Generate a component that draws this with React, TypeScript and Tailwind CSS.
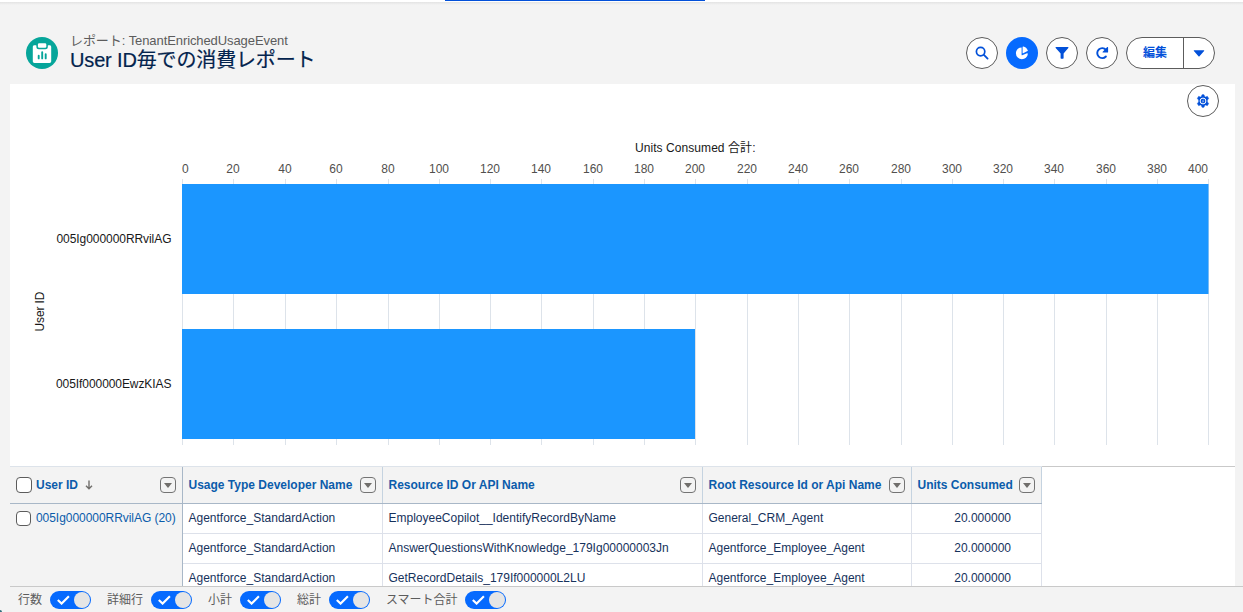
import React from "react";

const ticks = [182, 233, 285, 336, 388, 439, 490, 541, 593, 644, 695, 747, 798, 849, 901, 952, 1003, 1054, 1106, 1157, 1208];

const columns = [
  { label: "Usage Type Developer Name", width: "w-[200px]" },
  { label: "Resource ID Or API Name", width: "w-[320px]" },
  { label: "Root Resource Id or Api Name", width: "w-[209px]" },
  { label: "Units Consumed", width: "w-[130px]" },
];

const rows = [
  ["Agentforce_StandardAction", "EmployeeCopilot__IdentifyRecordByName", "General_CRM_Agent", "20.000000"],
  ["Agentforce_StandardAction", "AnswerQuestionsWithKnowledge_179Ig00000003Jn", "Agentforce_Employee_Agent", "20.000000"],
  ["Agentforce_StandardAction", "GetRecordDetails_179If000000L2LU", "Agentforce_Employee_Agent", "20.000000"],
];

const toggles = [
  { label: "行数", width: "w-[89px]" },
  { label: "詳細行", width: "w-[101px]" },
  { label: "小計", width: "w-[89px]" },
  { label: "総計", width: "w-[90px]" },
  { label: "スマート合計", width: "w-[121px] -ml-px tracking-[-0.05px]" },
];

function ReportIcon() {
  return (
    <svg width="32" height="32" viewBox="0 0 32 32" className="shrink-0" aria-hidden="true">
      <circle cx="16" cy="16" r="16" fill="#06a59a" />
      <rect x="11.9" y="6.2" width="8.4" height="4.6" rx="1.3" fill="#fff" />
      <path
        d="M8.500 8.200h1.400c.3 0 .5.2.5.5v1.200c0 1.300 1 2.300 2.300 2.300h6.800c1.300 0 2.300-1 2.300-2.300V8.700c0-.3.2-.5.5-.5h1.200c1 0 1.700.7 1.700 1.700v14.300c0 1-.7 1.700-1.700 1.700h-15c-1 0-1.700-.7-1.700-1.700V9.900c0-1 .7-1.700 1.700-1.700Z"
        fill="#fff"
      />
      <path d="M12.700 18.700v2.700M16.200 15.200v6.200M19.700 17.200v4.200" stroke="#06a59a" strokeWidth="1.900" strokeLinecap="round" />
    </svg>
  );
}

function CircleButton({ active, children, label }: { active?: boolean; children: React.ReactNode; label: string }) {
  return (
    <button
      aria-label={label}
      className={
        active
          ? "flex h-8 w-8 shrink-0 items-center justify-center rounded-full bg-[#066afe]"
          : "flex h-8 w-8 shrink-0 items-center justify-center rounded-full border border-[#5c5c5c] bg-white"
      }
    >
      {children}
    </button>
  );
}

function SearchIcon() {
  return (
    <svg width="14" height="14" viewBox="0 0 14 14" fill="none" stroke="#0250d9">
      <circle cx="5.600" cy="5.600" r="4.200" strokeWidth="1.700" />
      <path d="m8.900 8.900 3.700 3.700" strokeWidth="1.800" strokeLinecap="round" />
    </svg>
  );
}

function PieIcon() {
  return (
    <svg width="14" height="14" viewBox="0 0 14 14">
      <path d="M6.600 1.500C3.400 1.500.9 4 .9 7.300a6 6 0 0 0 6 5.900c3.100 0 5.700-2.200 5.900-5.400 0-.5-.4-.7-.8-.5L7.200 9.300c-.3.100-.6 0-.6-.300Z" fill="#fff" />
      <path d="M7.600 1c0-.4.300-.6.700-.5 2.100.4 3.700 1.800 4.500 3.900.1.300 0 .6-.3.700L8.200 7.300c-.3.100-.6 0-.6-.4Z" fill="#fff" />
    </svg>
  );
}

function FilterIcon() {
  return (
    <svg width="14" height="14" viewBox="0 0 14 14">
      <path d="M1.100 1h11.800c.5 0 .7.500.4.900L8.600 7.400v4.700c0 .4-.2.600-.6.600H6.200c-.4 0-.6-.2-.6-.6V7.400L.7 1.900C.4 1.500.6 1 1.100 1Z" fill="#0250d9" />
    </svg>
  );
}

function RefreshIcon() {
  return (
    <svg width="14" height="14" viewBox="0 0 14 14">
      <path d="M10.900 10.500a5 5 0 1 1 .1-6.700" fill="none" stroke="#0250d9" strokeWidth="1.900" strokeLinecap="round" />
      <path d="M13.100 1.500v4.400c0 .400-.2.600-.6.600H8.100c-.6 0-.7-.5-.4-.8L12.200 1.100c.4-.4.900-.1.900.400Z" fill="#0250d9" />
    </svg>
  );
}

function GearIcon() {
  return (
    <svg width="14" height="14" viewBox="0 0 14 14">
      <path
        d="M6 .8h2l.5 1.800 1 .5 1.900-.7 1.200 2-1.300 1.700v1.800l1.300 1.700-1.200 2-1.900-.7-1 .5L8 13.200H6l-.5-1.800-1-.5-1.900.7-1.200-2 1.300-1.700V6.100L1.400 4.400l1.200-2 1.900.7 1-.5Z"
        fill="#0250d9"
        stroke="#0250d9"
        strokeWidth=".6"
        strokeLinejoin="round"
      />
      <circle cx="7" cy="7" r="2.900" fill="none" stroke="#fff" strokeWidth="1" />
      <path d="M7.600 4.900 5.900 7.400h1L6.500 9.200l1.800-2.500h-1Z" fill="#fff" opacity=".6" />
    </svg>
  );
}

function ColumnMenu() {
  return (
    <button aria-label="列メニュー" className="flex h-4 w-4 shrink-0 items-center justify-center rounded-[4px] border border-[#747474]">
      <svg width="8" height="5" viewBox="0 0 8 5">
        <path d="M0 0h8L4 5Z" fill="#706e6b" />
      </svg>
    </button>
  );
}

function Chart() {
  return (
    <svg width="1225" height="382" viewBox="10 84 1225 382" className="block" fontSize="12">
      <text x="635" y="152" fill="#181818" textLength="120.500">Units Consumed 合計:</text>
      {ticks.map((x, i) => (
        <g key={x}>
          <rect x={x} y="179" width="1" height="266" fill="#dde3ea" />
          <text
            x={i === 0 ? 182 : i === 20 ? 1208 : x}
            y="173"
            fill="#514f4d"
            textAnchor={i === 0 ? "start" : i === 20 ? "end" : "middle"}
          >
            {i * 20}
          </text>
        </g>
      ))}
      <rect x="182" y="184" width="1026.500" height="110" fill="#1b96ff" />
      <rect x="182" y="329" width="513" height="110" fill="#1b96ff" />
      <text x="56.500" y="243" fill="#181818" textLength="115">005Ig000000RRvilAG</text>
      <text x="56" y="388" fill="#181818" textLength="115.500">005If000000EwzKIAS</text>
      <text transform="translate(44 331.500) rotate(-90)" fill="#181818" textLength="40">User ID</text>
    </svg>
  );
}

function Toggle() {
  return (
    <span className="flex h-[18px] w-[41px] shrink-0 items-center justify-between rounded-full bg-[#066afe] pl-[7px] pr-px">
      <svg width="13" height="10" viewBox="0 0 13 10" fill="none">
        <path d="m.8 4.900 3.800 3.700L11.900 1.200" stroke="#fff" strokeWidth="2.100" />
      </svg>
      <span className="h-4 w-4 rounded-full bg-[#e5e5e5]" />
    </span>
  );
}

export default function App() {
  return (
    <div className="relative flex h-[612px] w-[1243px] flex-col overflow-hidden bg-[#f3f3f3] font-['Liberation_Sans','Noto_Sans_CJK_JP',sans-serif] text-[12px] leading-4">
      <div className="flex h-[2px] shrink-0 justify-start bg-white pl-[445px]">
        <div className="h-px w-[260px] bg-[#0250d9]" />
      </div>
      <div className="h-[3px] shrink-0 bg-gradient-to-b from-[#e3e3e3] to-[#f3f3f3]" />

      <header className="flex h-[79px] shrink-0 items-start pl-[26px] pr-7 pt-8">
        <ReportIcon />
        <div className="-mt-1 ml-3 flex flex-col">
          <p className="h-4 whitespace-nowrap text-[13px] leading-[15px] tracking-[-0.09px] text-[#5c5c5c]">
            レポート: TenantEnrichedUsageEvent
          </p>
          <h1 className="whitespace-nowrap text-[20px] leading-[23px] tracking-[-0.15px] text-[#03234d] [-webkit-text-stroke:0.2px_#03234d]">
            User ID毎での消費レポート
          </h1>
        </div>
        <div className="ml-auto flex gap-2">
          <CircleButton label="検索"><SearchIcon /></CircleButton>
          <CircleButton label="グラフ" active><PieIcon /></CircleButton>
          <CircleButton label="検索条件"><FilterIcon /></CircleButton>
          <CircleButton label="更新"><RefreshIcon /></CircleButton>
          <div className="flex h-8 w-[89px] overflow-hidden rounded-full border border-[#5c5c5c] bg-white text-[#0250d9]">
            <button className="w-[57px] border-r border-[#5c5c5c] text-[12px] font-bold">編集</button>
            <button aria-label="その他" className="flex flex-1 items-center justify-center">
              <svg width="12" height="7" viewBox="0 0 12 7">
                <path d="M1.300.300h9.400c.5 0 .7.500.4.800L6.500 6.300c-.3.300-.7.300-1 0L.9 1.100C.6.800.8.300 1.300.300Z" fill="#0250d9" />
              </svg>
            </button>
          </div>
        </div>
      </header>

      <main className="ml-[10px] flex h-[502px] w-[1225px] shrink-0 flex-col overflow-hidden bg-white">
        <div className="relative h-[382px] shrink-0">
          <Chart />
          <div className="absolute right-4 top-px">
            <CircleButton label="グラフ設定"><GearIcon /></CircleButton>
          </div>
        </div>

        <div className="flex min-h-0 flex-1">
          <div className="flex w-[1032px] flex-col border-t border-[#dde3ea]">
            <div className="flex h-[37px] shrink-0 border-b border-[#a8b7c7] bg-[#f3f3f3] font-bold text-[#0b5cab]">
              <div className="flex w-[173px] items-center border-r border-[#a8b7c7] px-[6px]">
                <span className="mr-1 h-4 w-4 rounded-[4px] border border-[#5c5c5c] bg-white" />
                <span>User ID</span>
                <svg width="8" height="10" viewBox="0 0 8 10" className="ml-[7px]" fill="none" stroke="#706e6b" strokeWidth="1.400">
                  <path d="M4 .500v8M1 5.700l3 3 3-3" />
                </svg>
                <span className="ml-auto"><ColumnMenu /></span>
              </div>
              {columns.map((c) => (
                <div key={c.label} className={`flex items-center justify-between whitespace-nowrap border-r border-[#c5d3e0] pl-[5.500px] pr-[6px] ${c.width}`}>
                  <span>{c.label}</span>
                  <ColumnMenu />
                </div>
              ))}
            </div>
            <div className="flex min-h-0 flex-1 overflow-hidden">
              <div className="flex w-[173px] shrink-0 items-start whitespace-nowrap border-r border-[#a8b7c7] bg-[#f3f3f3] pl-[6px] pt-[6px] text-[#0b5cab]">
                <span className="mr-[5px] mt-px h-[15px] w-[15px] shrink-0 rounded-[4px] border border-[#5c5c5c] bg-white" />
                <span className="tracking-[-0.05px]">005Ig000000RRvilAG (20)</span>
              </div>
              <div className="flex flex-col">
                {rows.map((r, ri) => (
                  <div key={ri} className="flex h-[30px] shrink-0 border-b border-[#dde1ea] text-[#16325c]">
                    {r.map((cell, i) => (
                      <div
                        key={i}
                        className={`flex items-start whitespace-nowrap border-r border-[#dde1ea] pt-[6px] ${columns[i].width} ${i === 3 ? "justify-end pr-[30px]" : "pl-[5.500px]"}`}
                      >
                        {cell}
                      </div>
                    ))}
                  </div>
                ))}
              </div>
            </div>
          </div>
          <div className="flex-1 border-t border-[#c9c9c9]" />
        </div>
      </main>

      <footer className="ml-[10px] flex h-[26px] w-[1233px] shrink-0 border-t border-[#c9c9c9] pl-2 text-[#5c5c5c]">
        {toggles.map((t) => (
          <label key={t.label} className={`flex h-[26px] items-center gap-2 whitespace-nowrap ${t.width}`}>
            <span>{t.label}</span>
            <Toggle />
          </label>
        ))}
      </footer>
      <div className="absolute bottom-0 left-0 h-[2px] w-[2px] rounded-tr-full bg-[#2f6f7c]" />
    </div>
  );
}
